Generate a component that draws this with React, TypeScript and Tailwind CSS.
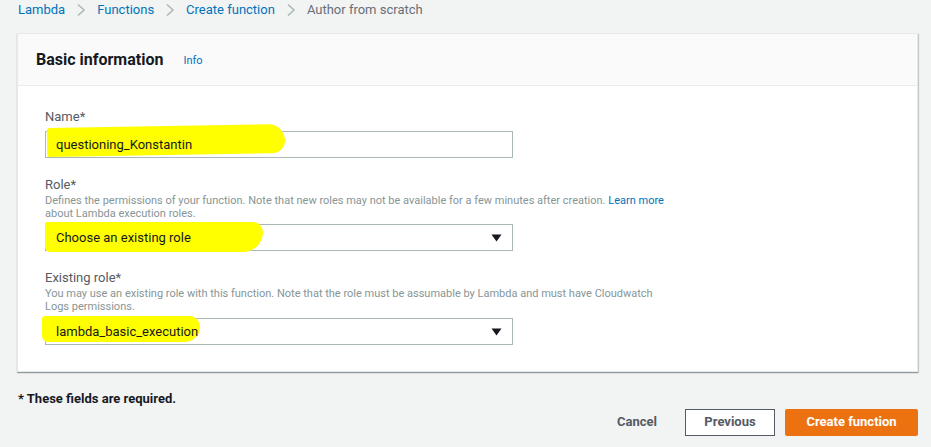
const font = { fontFamily: 'Roboto, "Open Sans", sans-serif' };

function Chevron() {
  return (
    <svg width="10" height="14" viewBox="0 0 10 14" className="mx-[11px]">
      <path d="M2 1.5 L8 7 L2 12.5" fill="none" stroke="#aab7b8" strokeWidth="1.5" />
    </svg>
  );
}

function Caret() {
  return (
    <svg width="11" height="8" viewBox="0 0 11 8">
      <path d="M0.5 0.5 H10.5 L5.5 7.5 Z" fill="#16191f" />
    </svg>
  );
}

function Field({ text, hl, select }: { text: string; hl: string; select?: boolean }) {
  return (
    <div className="relative w-[468px] h-[27px] border border-[#aab7b8] bg-white flex items-center pl-[10px] pr-[10px]">
      <span className={`absolute bg-[#ffff00] ${hl}`} />
      <span className="relative text-[13px] text-[#16191f] flex-1">{text}</span>
      {select && <span className="relative"><Caret /></span>}
    </div>
  );
}

export default function App() {
  return (
    <div className="w-[931px] h-[447px] bg-[#f2f3f3] overflow-hidden relative" style={font}>
      {/* breadcrumb */}
      <div className="flex items-center h-[20px] pl-[18px] text-[13px] leading-[20px]">
        <span className="text-[#0073bb]">Lambda</span>
        <Chevron />
        <span className="text-[#0073bb]">Functions</span>
        <Chevron />
        <span className="text-[#0073bb]">Create function</span>
        <Chevron />
        <span className="text-[#687078]">Author from scratch</span>
      </div>

      {/* panel */}
      <div className="ml-[17px] mt-[13px] w-[901px] bg-white border border-[#e6e9e9] shadow-[0_1px_1px_0_rgba(0,28,36,0.3),1px_1px_1px_0_rgba(0,28,36,0.15)]">
        <div className="h-[52px] bg-[#fafafa] border-b border-[#eaeded] flex items-center pl-[18px]">
          <span className="text-[16px] font-bold text-[#16191f]">Basic information</span>
          <span className="ml-[20px] mt-[3px] text-[11px] text-[#0073bb]">Info</span>
        </div>
        <div className="pl-[27px] pt-[22px] pb-[26px]">
          <div className="text-[13px] text-[#545b64] leading-[18px]">Name*</div>
          <div className="mt-[5px]">
            <Field text="questioning_Konstantin" hl="left-[1px] top-[-6px] w-[238px] h-[29px] rounded-[6px_40px_30px_4px] -rotate-[1deg]" />
          </div>

          <div className="mt-[18px] text-[13px] text-[#545b64] leading-[18px]">Role*</div>
          <div className="text-[11px] text-[#879596] leading-[13px] w-[630px]">
            Defines the permissions of your function. Note that new roles may not be available for a few minutes after creation.{' '}
            <span className="text-[#0073bb]">Learn more</span> about Lambda execution roles.
          </div>
          <div className="mt-[4px]">
            <Field text="Choose an existing role" hl="left-[-1px] top-[-3px] w-[218px] h-[30px] rounded-[4px_20px_40px_10px]" select />
          </div>

          <div className="mt-[18px] text-[13px] text-[#545b64] leading-[18px]">Existing role*</div>
          <div className="text-[11px] text-[#879596] leading-[13px] w-[615px]">
            You may use an existing role with this function. Note that the role must be assumable by Lambda and must have Cloudwatch Logs permissions.
          </div>
          <div className="mt-[5px]">
            <Field text="lambda_basic_execution" hl="left-[-4px] top-[-3px] w-[158px] h-[26px] rounded-[4px_14px_20px_8px]" select />
          </div>
        </div>
      </div>

      {/* footer */}
      <div className="pl-[18px] mt-[17px] text-[13px] font-bold text-[#16191f]">* These fields are required.</div>
      <div className="flex items-center justify-end pr-[13px] mt-0">
        <span className="text-[13px] font-bold text-[#545b64] mr-[28px]">Cancel</span>
        <div className="w-[90px] h-[27px] border border-[#545b64] bg-white flex items-center justify-center text-[13px] font-bold text-[#545b64] mr-[10px]">Previous</div>
        <div className="w-[133px] h-[27px] bg-[#ec7211] rounded-[2px] flex items-center justify-center text-[13px] font-bold text-white">Create function</div>
      </div>
    </div>
  );
}
